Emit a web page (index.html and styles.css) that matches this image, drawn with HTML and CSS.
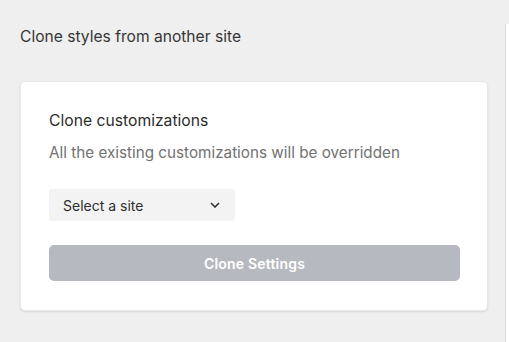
FILE: index.html
```html
<!DOCTYPE html>
<html lang="en">
<head>
    <meta charset="UTF-8">
    <title>Clone styles</title>
    <link rel="stylesheet" href="styles.css">
</head>
<body>

    <!-- Main panel -->
    <div class="main">
        <h2 class="page-title">Clone styles from another site</h2>

        <div class="card">
            <h3>Clone customizations</h3>
            <p class="hint">All the existing customizations will be overridden</p>

            <div class="site-select">
                <span>Select a site</span>
                <svg width="10" height="6" viewBox="0 0 10 6"><path d="M1 1l4 4 4-4" fill="none" stroke="#333" stroke-width="1.6"/></svg>
            </div>

            <button class="clone-btn" disabled>Clone Settings</button>
        </div>
    </div>

    <!-- Side panel (cut off) -->
    <div class="side"></div>

</body>
</html>
```

FILE: styles.css
```css
* {
    margin: 0;
    padding: 0;
    box-sizing: border-box;
    font-family: Inter, "Noto Sans", sans-serif;
}

body {
    display: flex;
    height: 100vh;
    background-color: #efefef;
    overflow: hidden;
}

/* Main panel */
.main {
    width: 505px;
    padding: 27px 17px 0 20px;
}

.page-title {
    font-size: 15.6px;
    font-weight: 400;
    line-height: 20px;
    color: #363636;
    margin-bottom: 34px;
}

.card {
    background: #fff;
    border: 1px solid #e8e8e8;
    border-radius: 5px;
    box-shadow: 0 1px 2px rgba(0, 0, 0, 0.1);
    padding: 27px 27px 29px 28px;
}

.card h3 {
    font-size: 15.7px;
    font-weight: 400;
    line-height: 24px;
    color: #2c2c2c;
}

.hint {
    margin-top: 9px;
    font-size: 15.25px;
    line-height: 22px;
    color: #727272;
}

.site-select {
    margin-top: 25px;
    width: 186px;
    height: 32px;
    padding: 0 15px 0 14px;
    display: flex;
    align-items: center;
    justify-content: space-between;
    background: #f3f3f3;
    border-radius: 3px;
    font-size: 14px;
    color: #2f2f2f;
}

.clone-btn {
    display: block;
    width: 100%;
    height: 36px;
    margin-top: 24px;
    border: none;
    border-radius: 5px;
    background: #b7b9c0;
    color: #fff;
    font-size: 14px;
    font-weight: 600;
    letter-spacing: 0.2px;
}

/* Side panel */
.side {
    flex: 1;
    margin-top: 24px;
    background: #fff;
    border-left: 1px solid #dcdcdc;
}
```
